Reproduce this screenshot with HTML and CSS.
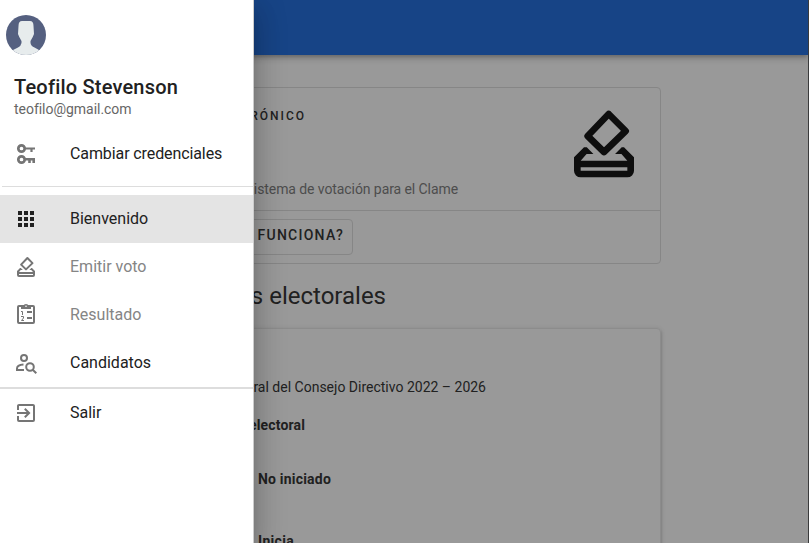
FILE: index.html
```html
<!DOCTYPE html>
<html lang="es">
<head>
<meta charset="utf-8">
<title>Votación</title>
<link rel="stylesheet" href="styles.css">
</head>
<body>
<svg class="defs" width="0" height="0"><symbol id="vote" viewBox="0 0 24 24"><path fill-rule="evenodd" d="M18 13H17.32L15.32 15H17.23L19 17H5L6.78 15H8.83L6.83 13H6L3 16V20A2 2 0 0 0 5 22H19A2 2 0 0 0 21 20V16ZM19 20H5V19H19Z"/><path d="M13.4 3L18.5 8.1L12 14.4L7.1 9.6Z" fill="none" stroke="currentColor" stroke-width="2" stroke-linejoin="round"/></symbol></svg>
<div class="page">
  <header class="bar"></header>
  <main class="main">
    <section class="card intro">
      <div class="intro-body">
        <div class="intro-text">
          <div class="overline">RÓNICO</div>
          <div class="subtitle">istema de votación para el Clame</div>
        </div>
        <svg class="vote-big"><use href="#vote"/></svg>
      </div>
      <div class="actions"><button class="button">FUNCIONA?</button></div>
    </section>
    <h2 class="heading">s electorales</h2>
    <section class="card process">
      <p class="line period">ral del Consejo Directivo 2022 – 2026</p>
      <p class="line strong stage">electoral</p>
      <p class="line strong state">No iniciado</p>
      <p class="line strong start">Inicia</p>
    </section>
  </main>
  <div class="edge"></div>
</div>
<nav class="drawer">
  <svg class="avatar" viewBox="0 0 40 40"><clipPath id="round"><circle cx="20" cy="20" r="20"/></clipPath><g clip-path="url(#round)"><path fill="#556080" d="M0 0H40V40H0Z"/><path fill="#e7eced" d="M12.5 11Q12.5 6 16 6H24Q27.5 6 27.5 11L28 19Q27 22 24.5 26V28Q25 31 28.5 32.5L33 35L36 40H4L7 35L12 32.5Q15 31 15.5 28V26Q13 22 12 19Z"/></g></svg>
  <div class="user"><div class="name">Teofilo Stevenson</div><div class="mail">teofilo@gmail.com</div></div>
  <a class="item keys"><svg class="icon" viewBox="0 0 24 24"><g fill="none" stroke="currentColor"><circle cx="7.5" cy="6.5" r="3.2" stroke-width="2.7"/><path stroke-width="2.2" d="M10.5 6.5H21M17.5 6.5V10"/><circle cx="7.5" cy="17.5" r="3.2" stroke-width="2.7"/><path stroke-width="2.6" d="M10.5 17.3H21M15.5 17.5V21M19.7 17.5V21"/></g></svg><span>Cambiar credenciales</span></a>
  <hr class="rule">
  <a class="item active"><svg class="icon" viewBox="0 0 24 24"><path d="M16 20H20V16H16M16 14H20V10H16M10 8H14V4H10M16 8H20V4H16M10 14H14V10H10M4 14H8V10H4M4 20H8V16H4M10 20H14V16H10M4 8H8V4H4V8Z"/></svg><span>Bienvenido</span></a>
  <a class="item disabled"><svg class="icon" viewBox="0 0 24 24"><use href="#vote"/></svg><span>Emitir voto</span></a>
  <a class="item disabled"><svg class="icon" viewBox="0 0 24 24"><g transform="translate(0 -1)"><rect x="4" y="4" width="16" height="17" rx="1" fill="none" stroke="currentColor" stroke-width="2"/><path d="M7 4H9.2A3 3 0 0 1 14.8 4H17V7H7ZM13 9H18V11H13ZM13 15H18V17H13Z"/><circle cx="12" cy="4.2" r=".8" fill="#fff"/><path fill="none" stroke="currentColor" d="M7 9.5H8.5V13M7 14.5H9.5V16L7.5 18.5H10"/></g></svg><span>Resultado</span></a>
  <a class="item"><svg class="icon" viewBox="0 0 24 24"><g fill="none" stroke="currentColor" stroke-width="2"><circle cx="10" cy="7" r="3"/><circle cx="16" cy="16" r="3.8"/><path d="M18.7 18.7L22.3 22.3M9.5 13.5Q3 14 3 17.5V19H10"/></g></svg><span>Candidatos</span></a>
  <hr class="rule thick">
  <a class="item"><svg class="icon" viewBox="0 0 24 24"><path d="M19 3H5C3.89 3 3 3.89 3 5V9H5V5H19V19H5V15H3V19A2 2 0 0 0 5 21H19A2 2 0 0 0 21 19V5C21 3.89 20.1 3 19 3M10.08 15.58L11.5 17L16.5 12L11.5 7L10.08 8.41L12.67 11H3V13H12.67L10.08 15.58Z"/></svg><span>Salir</span></a>
</nav>
</body>
</html>
```
FILE: styles.css
```css
* { box-sizing: border-box; }
body { margin: 0; width: 809px; height: 543px; overflow: hidden; position: relative; font-family: Roboto, sans-serif; color: #212121; background: #999; }
.defs { display: none; }
svg { fill: currentColor; }
.page { display: grid; grid-template: 55px 488px / 808px 1px; }
.bar { background: #174486; box-shadow: 0 2px 4px -1px rgba(0,0,0,.2), 0 4px 5px rgba(0,0,0,.12), 0 1px 10px rgba(0,0,0,.1); }
.edge { grid-area: 1 / 2 / 3 / 3; background: #3a3b3c; }
.main { padding: 32px 0 0 230px; width: 661px; }
.card { border: 1px solid #868686; border-radius: 4px; }
.intro { height: 177px; }
.intro-body { height: 123px; display: flex; justify-content: space-between; border-bottom: 1px solid #868686; }
.intro-text { width: 227px; padding-top: 20px; text-align: right; white-space: nowrap; }
.overline { width: 75px; font-size: 12px; line-height: 16px; font-weight: 500; letter-spacing: 2px; }
.subtitle { margin-top: 55px; font-size: 14px; line-height: 20px; color: #4d4d4d; letter-spacing: -.08px; }
.vote-big { width: 80px; height: 80px; margin: 16px 16px 0 0; color: #0e0e0e; }
.actions { padding: 8px; }
.button { display: block; width: 114px; height: 36px; padding: 0 8px 4px; border: 1px solid #868686; border-radius: 4px; background: none; color: inherit; font: 500 14px Roboto, sans-serif; letter-spacing: 1.25px; text-align: right; white-space: nowrap; }
.heading { width: 156px; margin: 16px 0; font-size: 24px; line-height: 32px; font-weight: 400; text-align: right; white-space: nowrap; }
.process { height: 230px; box-shadow: 0 2px 3px rgba(0,0,0,.2), 0 1px 5px rgba(0,0,0,.12); border-color: #8c8c8c; padding-top: 48px; }
.line { margin: 0; font-size: 14px; line-height: 20px; text-align: right; white-space: nowrap; }
.period { width: 255px; }
.strong { font-weight: 700; }
.stage { width: 74px; margin-top: 18px; letter-spacing: .15px; }
.state { width: 100px; margin-top: 34px; letter-spacing: .2px; }
.start { width: 63px; margin-top: 42px; letter-spacing: .3px; }
.drawer { position: absolute; top: 0; left: 0; width: 254px; height: 543px; background: #fff; border-right: 1px solid #ccc; box-shadow: 0 8px 10px -5px rgba(0,0,0,.2), 0 16px 24px 2px rgba(0,0,0,.14), 0 6px 30px 5px rgba(0,0,0,.12); }
.avatar { display: block; width: 40px; height: 40px; margin: 15px 0 0 6px; }
.user { padding: 20px 0 0 14px; height: 75px; }
.name { font-size: 20px; font-weight: 500; line-height: 24px; letter-spacing: .2px; }
.mail { font-size: 14px; line-height: 20px; color: #666; letter-spacing: -.03px; }
.item { display: flex; align-items: center; height: 48px; padding-left: 14px; gap: 32px; font-size: 16px; line-height: 24px; }
.keys { letter-spacing: -.1px; }
.icon { width: 24px; height: 24px; color: #757575; }
.active { background: #e4e4e4; }
.active .icon { color: #212121; }
.disabled { color: #858585; }
.rule { margin: 8px 0 8px 2px; border: 0; height: 1px; background: #ddd; }
.thick { margin: 0; height: 2px; }
```
